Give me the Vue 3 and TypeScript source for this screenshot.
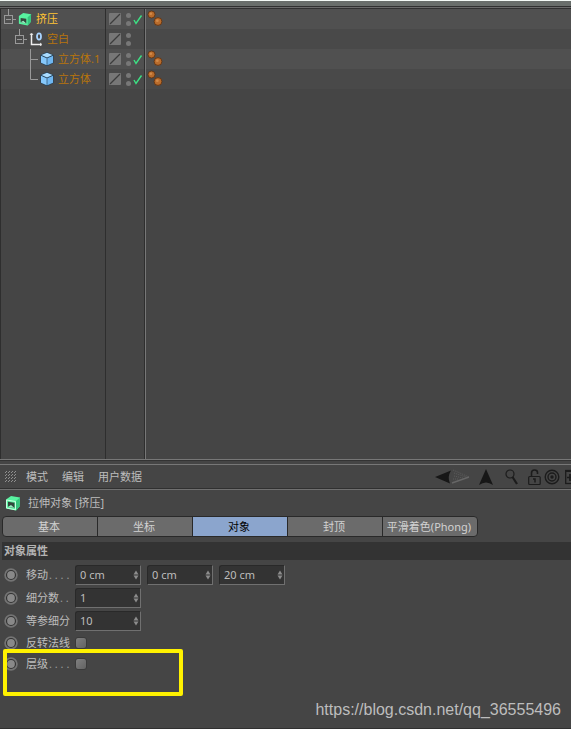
<script setup lang="ts">
import { ref } from 'vue'

interface TreeItem {
  name: string
  depth: number
  kind: 'extrude' | 'null' | 'cube'
  guide: 'node' | 'branch' | 'end'
  enabled: boolean
  selected: boolean
}

const items: TreeItem[] = [
  { name: '挤压', depth: 0, kind: 'extrude', guide: 'node', enabled: true, selected: true },
  { name: '空白', depth: 1, kind: 'null', guide: 'node', enabled: false, selected: false },
  { name: '立方体.1', depth: 2, kind: 'cube', guide: 'branch', enabled: true, selected: false },
  { name: '立方体', depth: 2, kind: 'cube', guide: 'end', enabled: true, selected: false },
]

const menus = ['模式', '编辑', '用户数据']
const tabs = ['基本', '坐标', '对象', '封顶', '平滑着色(Phong)']
const activeTab = ref('对象')

const numberRows = ref([
  { id: 'move', label: '移动', dots: '. . . .', values: ['0 cm', '0 cm', '20 cm'] },
  { id: 'subdivision', label: '细分数', dots: '. .', values: ['1'] },
  { id: 'iso', label: '等参细分', dots: '', values: ['10'] },
])

const checkRows = ref([
  { id: 'flip', label: '反转法线', dots: '', checked: false, marked: false },
  { id: 'hierarchy', label: '层级', dots: '. . . .', checked: false, marked: true },
])
</script>

<template>
  <main class="app">
    <div class="strip"></div>
    <section class="tree">
      <div v-for="item in items" :key="item.name" class="row">
        <div class="cell name" :class="'depth-' + item.depth">
          <svg class="guide" width="13" height="20" viewBox="0 0 13 20" fill="none" stroke="#999">
            <template v-if="item.guide === 'node'">
              <path d="M4.5 0V6M9 10.5H12" />
              <rect x=".5" y="6.5" width="8" height="8" />
              <path d="M2 10.5H7" />
            </template>
            <path v-else-if="item.guide === 'branch'" d="M4.5 0V20M4.5 10.5H12" />
            <path v-else d="M4.5 0V10.5H12" />
          </svg>
          <svg v-if="item.kind === 'extrude'" width="14" height="14" viewBox="0 0 16 16">
            <path d="M1 4.500L6 1L15 2.500L14.500 11.500L11 15.500L1 13.500Z" fill="#58f2a0" />
            <path d="M11 6L15 2.500L14.500 11.500L11 15.500Z" fill="#35c57d" />
            <path d="M3 6.800L9.500 7.800V13L3 11.800Z" fill="#33473d" />
            <path d="M3 11.800L6 10L9.500 13Z" fill="#9af0c4" />
          </svg>
          <svg v-else-if="item.kind === 'null'" width="14" height="14" viewBox="0 0 14 14" fill="none">
            <path d="M2.500 2V12.500H12" stroke="#eee" stroke-width="1.500" />
            <path d="M1 3L2.500 1L4 3M11 11L13 12.500L11 14" stroke="#ddd" />
            <ellipse cx="10" cy="4.500" rx="2" ry="3.200" stroke="#a9d4ff" stroke-width="1.800" />
          </svg>
          <svg v-else width="14" height="14" viewBox="0 0 14 14">
            <path d="M7 0L13.500 3V11L7 14L.5 11V3Z" fill="#203d55" />
            <path d="M7 .8L12.500 3L7 5.500L1.500 3Z" fill="#a9dcff" />
            <path d="M1 3.800L6.700 6.200V13.200L1 10.700Z" fill="#86c8fb" />
            <path d="M7.300 6.200L13 3.800V10.700L7.300 13.200Z" fill="#6fb6f0" />
          </svg>
          <span class="label" :class="{ selected: item.selected }">{{ item.name }}</span>
        </div>
        <div class="cell flags">
          <svg width="38" height="20" viewBox="0 0 38 20">
            <rect x="3" y="4" width="12" height="12" rx="1" fill="#777" />
            <path d="M4 15L14 5" stroke="#3c3c3c" stroke-width="1.300" />
            <circle cx="22.500" cy="6.500" r="2.500" fill="#777" />
            <circle cx="22.500" cy="14.500" r="2.500" fill="#777" />
            <path v-if="item.enabled" d="M28 11L30 14.500L35.500 6.500" fill="none" stroke="#3ce184" stroke-width="1.400" />
          </svg>
        </div>
        <div class="cell tags">
          <svg v-if="item.enabled" width="20" height="20" viewBox="0 0 20 20">
            <g stroke="#5a2d0c" stroke-width=".8">
              <circle cx="6.500" cy="5.500" r="3.500" fill="#b96c2c" />
              <circle cx="13" cy="12.500" r="3.900" fill="#b96c2c" />
            </g>
            <circle cx="5.800" cy="4.700" r="1.300" fill="#d08a4a" />
            <circle cx="12.300" cy="11.700" r="1.400" fill="#d08a4a" />
          </svg>
        </div>
      </div>
      <div class="row rest">
        <div class="cell"></div>
        <div class="cell flags"></div>
        <div class="cell tags"></div>
      </div>
    </section>
    <div class="splitter"></div>

    <section class="attributes">
      <nav class="toolbar">
        <svg class="grip" width="12" height="12" viewBox="0 0 12 12" stroke="#999" stroke-width=".9">
          <path d="M0 2L2 0M3 2L5 0M6 2L8 0M9 2L11 0M0 5L2 3M3 5L5 3M6 5L8 3M9 5L11 3M0 8L2 6M3 8L5 6M6 8L8 6M9 8L11 6M0 11L2 9M3 11L5 9M6 11L8 9M9 11L11 9" />
        </svg>
        <button v-for="menu in menus" :key="menu" type="button" class="menu">{{ menu }}</button>
        <div class="tools">
          <button type="button" aria-label="后退">
            <svg width="17" height="16" viewBox="0 0 17 16"><path d="M1 8L17 1.500Q13 8 16 14.500Z" fill="#171717" /></svg>
          </button>
          <button type="button" aria-label="前进">
            <svg width="20" height="16" viewBox="0 0 20 16" fill="none">
              <path d="M2 1L18 8" stroke="#5c5c5c" stroke-dasharray="1 1" />
              <path d="M3 4L15 8M3 7L12 9M2 10L8 10" stroke="#5c5c5c" stroke-dasharray="1 1" />
              <path d="M1 14L18 8" stroke="#666" stroke-width="1.400" />
            </svg>
          </button>
          <button type="button" class="up" aria-label="向上">
            <svg width="14" height="16" viewBox="0 0 14 16"><path d="M7 0L14 16Q7 11 0 16Z" fill="#171717" /></svg>
          </button>
          <button type="button" class="search" aria-label="搜索">
            <svg width="14" height="16" viewBox="0 0 14 16" fill="none" stroke="#1c1c1c">
              <circle cx="5" cy="5" r="4" stroke-width="1.200" />
              <path d="M7.500 8L12 15" stroke-width="2.200" />
            </svg>
          </button>
          <button type="button" class="lock" aria-label="锁定">
            <svg width="13" height="16" viewBox="0 0 13 16" fill="none" stroke="#1c1c1c">
              <rect x=".7" y="7.500" width="11.500" height="8" rx="1" stroke-width="1.200" />
              <path d="M3.500 7V4Q3.500 1 6.500 1T9.500 3.500V5" stroke-width="1.600" />
              <path d="M5 10H7V13.500" stroke-width="1.500" />
            </svg>
          </button>
          <button type="button" aria-label="目标">
            <svg width="16" height="16" viewBox="0 0 16 16" fill="none" stroke="#1c1c1c" stroke-width="1.400">
              <circle cx="8" cy="8" r="6.800" /><circle cx="8" cy="8" r="4" />
              <circle cx="8" cy="8" r="1.700" fill="#1c1c1c" stroke="none" />
            </svg>
          </button>
          <button type="button" class="add" aria-label="新建面板">
            <svg width="14" height="16" viewBox="0 0 14 16" fill="none" stroke="#1c1c1c">
              <rect x=".7" y="1.500" width="12.500" height="13" stroke-width="1.300" />
              <path d="M1 2H13" stroke-width="2" /><path d="M5 5V12M2 8.500H8" stroke-width="1.700" />
            </svg>
          </button>
        </div>
      </nav>

      <header class="object">
        <svg width="16" height="16" viewBox="0 0 16 16">
          <path d="M1 4.500L6 1L15 2.500L14.500 11.500L11 15.500L1 13.500Z" fill="#58f2a0" />
          <path d="M11 6L15 2.500L14.500 11.500L11 15.500Z" fill="#35c57d" />
          <path d="M1.500 5L10.500 6.500V14.800L1.500 13Z" fill="none" stroke="#c9ffe1" />
          <path d="M3 6.800L9.500 7.800V13L3 11.800Z" fill="#33473d" />
          <path d="M3 11.800L6 10L9.500 13Z" fill="#9af0c4" />
        </svg>
        <h1>拉伸对象 [挤压]</h1>
      </header>

      <div class="tabs" role="tablist">
        <button
          v-for="tab in tabs"
          :key="tab"
          type="button"
          role="tab"
          :aria-selected="activeTab === tab"
          :class="{ active: activeTab === tab }"
          @click="activeTab = tab"
        >{{ tab }}</button>
      </div>

      <h2>对象属性</h2>

      <form class="fields" @submit.prevent>
        <div v-for="row in numberRows" :key="row.id" class="field">
          <svg class="key" width="14" height="14" viewBox="0 0 14 14">
            <circle cx="7" cy="7" r="5.900" fill="#333" stroke="#747474" stroke-width="1.700" />
            <circle cx="7" cy="7" r="3.900" fill="#898989" />
          </svg>
          <label :for="row.id + '-0'">{{ row.label }}<span class="dots">{{ row.dots }}</span></label>
          <span v-for="(_, i) in row.values" :key="i" class="number">
            <input :id="row.id + '-' + i" v-model="row.values[i]" type="text" :aria-label="row.label" />
            <svg width="6" height="10" viewBox="0 0 6 10" fill="#8c8c8c"><path d="M3 .5L5.500 4.500H.5ZM3 9.500L5.500 5.500H.5Z" /></svg>
          </span>
        </div>
        <div v-for="row in checkRows" :key="row.id" class="field check">
          <svg class="key" width="14" height="14" viewBox="0 0 14 14">
            <circle cx="7" cy="7" r="5.900" fill="#333" stroke="#747474" stroke-width="1.700" />
            <circle cx="7" cy="7" r="3.900" fill="#898989" />
          </svg>
          <label :for="row.id">{{ row.label }}<span class="dots">{{ row.dots }}</span></label>
          <input :id="row.id" v-model="row.checked" type="checkbox" />
          <span v-if="row.marked" class="marker"></span>
        </div>
      </form>
      <span class="watermark">https://blog.csdn.net/qq_36555496</span>
    </section>
  </main>
</template>

<style>
body {
  background: #454545;
}
</style>

<style scoped>
* {
  box-sizing: border-box;
}
.app {
  display: flex;
  flex-direction: column;
  min-height: 100vh;
  overflow: hidden;
  background: #454545;
  color: #bdbdbd;
  font: 11px/16px "Noto Sans", "Noto Sans CJK SC", sans-serif;
}
svg {
  display: block;
  flex: none;
}
button {
  padding: 0;
  border: 0;
  background: none;
  color: inherit;
  font: inherit;
}
.strip {
  height: 9px;
  border-top: 1px solid #f4faf6;
  background: linear-gradient(#696e6b 5px, #303030 5px, #303030 6px, #6a6a6a 6px, #6a6a6a 7px, #303030 7px);
}
.tree {
  display: flex;
  flex: 1;
  flex-direction: column;
}
.row {
  display: grid;
  grid-template-columns: 105px 39px 1fr;
  height: 20px;
  background: #494949;
}
.row:nth-child(odd) {
  background: #505050;
}
.row.rest {
  flex: 1;
  background: #454545;
}
.cell {
  display: flex;
  align-items: center;
  border-left: 1px solid #2e2e2e;
}
.tags {
  box-shadow: inset 1px 0 #777;
}
.depth-0 {
  padding-left: 3px;
}
.depth-1 {
  padding-left: 14px;
}
.depth-2 {
  padding-left: 25px;
}
.guide {
  margin-right: 1px;
}
.label {
  margin-left: 4px;
  color: #b8750c;
  white-space: nowrap;
}
.label.selected {
  color: #ffc535;
}
.splitter {
  height: 6px;
  border-top: 1px solid #777;
  border-bottom: 1px solid #777;
  background: linear-gradient(#333 1px, #454545 1px);
}
.attributes {
  position: relative;
  padding-bottom: 52px;
  border-bottom: 1px solid #303030;
}
.toolbar {
  display: flex;
  align-items: center;
  height: 25px;
  padding-left: 5px;
  border-bottom: 1px solid #707070;
  box-shadow: inset 0 -1px #303030;
  overflow: hidden;
}
.grip {
  margin-right: 9px;
}
.menu {
  margin-right: 14px;
  white-space: nowrap;
}
.tools {
  display: flex;
  align-items: center;
  margin-right: -8px;
  margin-left: auto;
}
.up {
  margin-left: 8px;
}
.search {
  margin-left: 12px;
}
.lock {
  margin: 0 3px 0 9px;
}
.add {
  margin-left: 5px;
}
.object {
  display: flex;
  align-items: center;
  gap: 7px;
  height: 26px;
  padding-left: 5px;
}
h1,
h2 {
  margin: 0;
  font-size: 11px;
  font-weight: 400;
}
.tabs {
  display: flex;
  width: 476px;
  max-width: calc(100% - 4px);
  height: 21px;
  margin-left: 2px;
  overflow: hidden;
  border: 1px solid #292929;
  border-radius: 4px;
  background: #6b6b6b;
}
.tabs button {
  flex: 1 1 0;
  min-width: 0;
  padding-right: 2px;
  color: #d2d2d2;
  line-height: 18px;
  white-space: nowrap;
}
.tabs button + button {
  border-left: 1px solid #292929;
}
.tabs .active {
  background: #8ba5cd;
  color: #000;
}
h2 {
  height: 18px;
  margin: 5px 0 5px 2px;
  padding-left: 2px;
  background: #333;
  color: #b4b4b4;
  font-weight: 700;
  line-height: 18px;
}
.field {
  position: relative;
  display: flex;
  align-items: center;
  height: 20px;
  margin-bottom: 3px;
  padding-left: 4px;
}
.field label {
  width: 49px;
  margin-left: 8px;
  white-space: nowrap;
}
.dots {
  margin-left: 1px;
  color: #999;
}
.number {
  display: flex;
  align-items: center;
  width: 66px;
  height: 20px;
  margin-right: 6px;
  padding-right: 1px;
  border: 1px solid #292929;
  border-right-color: #707070;
  border-bottom-color: #707070;
  border-radius: 3px 0 0 0;
  background: #333;
}
.number input {
  flex: 1;
  min-width: 0;
  height: 18px;
  padding: 0 0 2px 4px;
  border: 0;
  outline: 0;
  background: none;
  color: #bdbdbd;
  font: inherit;
}
.check {
  height: 18px;
}
.check input {
  width: 12px;
  height: 12px;
  margin: 0;
  appearance: none;
  border: 1px solid #3a3a3a;
  border-radius: 3px;
  background: linear-gradient(135deg, #808080, #626262);
}
.check input:checked {
  background: #8ba5cd;
}
.marker {
  position: absolute;
  top: -6px;
  left: 3px;
  width: 180px;
  height: 47px;
  border: 4px solid #fff200;
  border-radius: 2px;
  pointer-events: none;
}
.watermark {
  position: absolute;
  right: 10px;
  bottom: 8px;
  color: #bdbdbd;
  font: 16px/20px "Liberation Sans", sans-serif;
}
</style>
